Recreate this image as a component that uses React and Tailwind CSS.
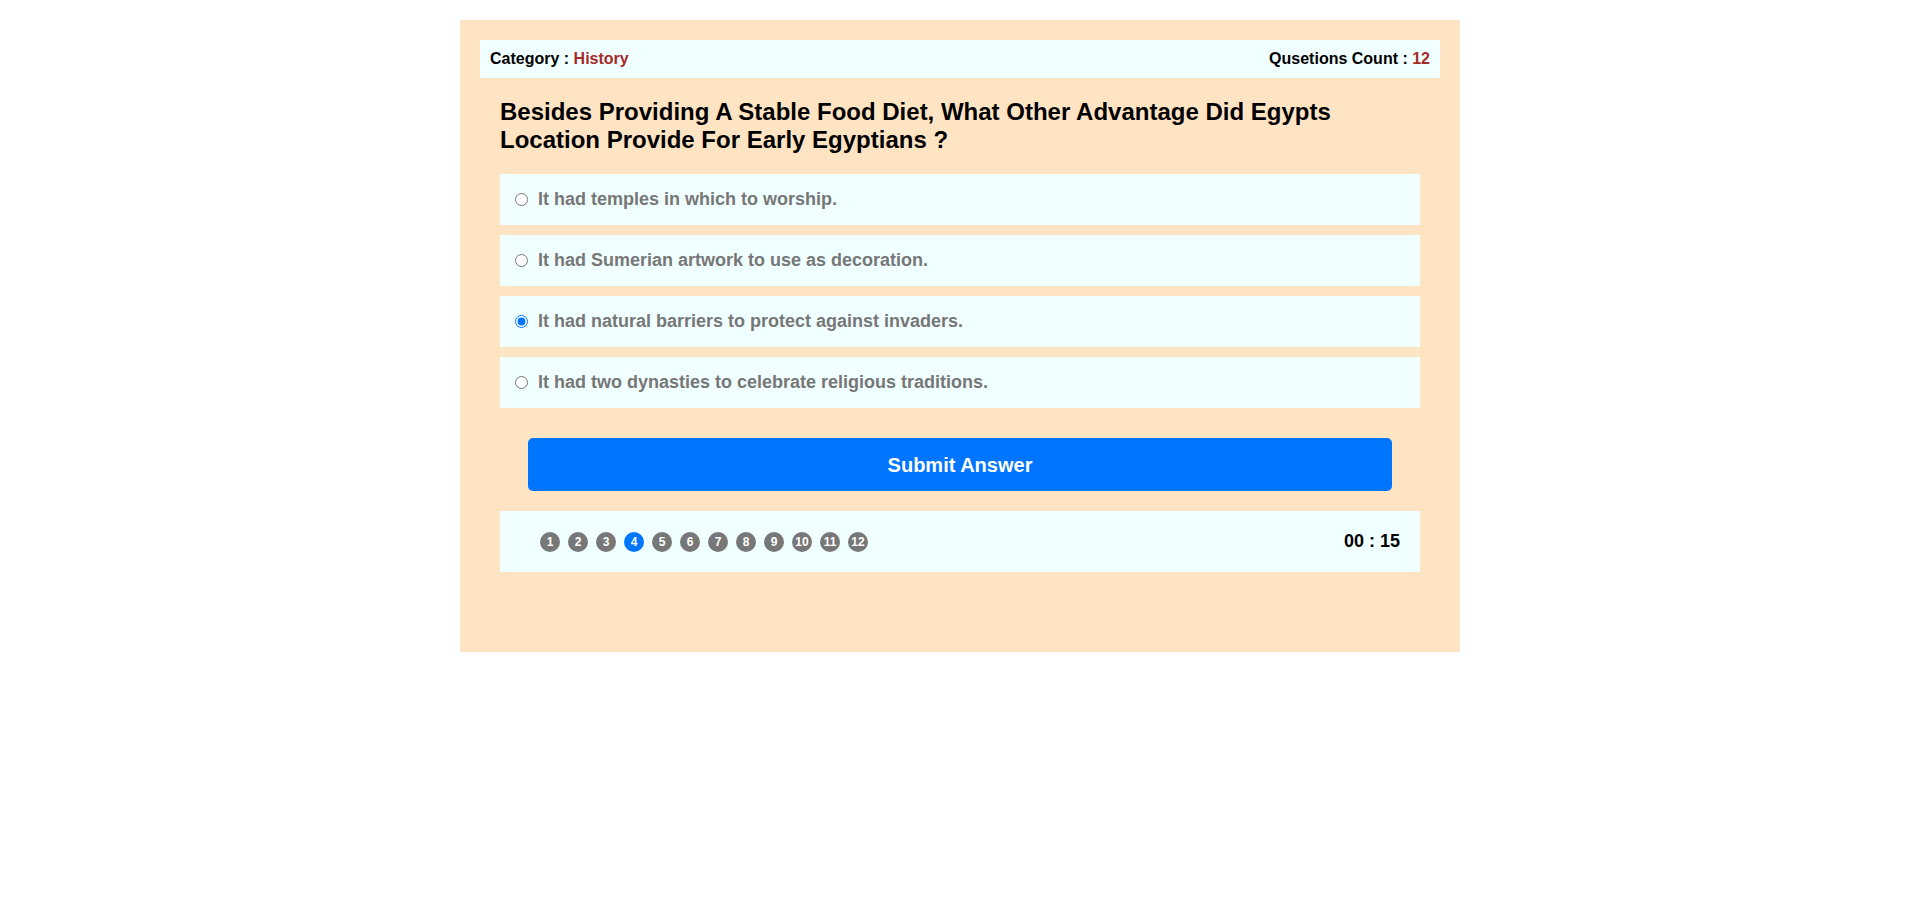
import { useState } from "react";

export default function App() {
  const [selected, setSelected] = useState(2);
  const [current] = useState(4);

  const answers = [
    "It had temples in which to worship.",
    "It had Sumerian artwork to use as decoration.",
    "It had natural barriers to protect against invaders.",
    "It had two dynasties to celebrate religious traditions.",
  ];

  const bullets = [1, 2, 3, 4, 5, 6, 7, 8, 9, 10, 11, 12];

  return (
    <div className="min-h-screen bg-white font-['Liberation_Sans',Arial,sans-serif] pt-5">
      <div className="mx-auto w-[1000px] h-[632px] bg-[#ffe4c4] p-5">
        {/* Info bar */}
        <div className="flex items-center justify-between h-[38px] px-[10px] bg-[#f0ffff] text-[16px] font-bold text-black">
          <div>
            Category : <span className="text-[#a52a2a]">History</span>
          </div>
          <div>
            Qusetions Count : <span className="text-[#a52a2a]">12</span>
          </div>
        </div>

        <div className="px-5">
          {/* Question */}
          <h2 className="mt-5 mb-5 text-[24px] leading-[28px] font-bold text-black">
            Besides Providing A Stable Food Diet, What Other Advantage Did Egypts
            Location Provide For Early Egyptians ?
          </h2>

          {/* Answers */}
          <div className="flex flex-col gap-[10px]">
            {answers.map((item, i) => (
              <label
                key={i}
                className="flex items-center h-[51px] pl-[15px] bg-[#f0ffff] cursor-pointer"
              >
                <input
                  type="radio"
                  name="answer"
                  checked={selected === i}
                  onChange={() => setSelected(i)}
                  className="w-[13px] h-[13px] m-0 accent-[#0075ff]"
                />
                <span className="ml-[10px] text-[18px] font-bold text-[#777777]">
                  {item}
                </span>
              </label>
            ))}
          </div>

          {/* Submit */}
          <div className="px-[28px] mt-[30px]">
            <button className="w-full h-[53px] rounded-[5px] bg-[#0075ff] text-white text-[20px] font-bold">
              Submit Answer
            </button>
          </div>

          {/* Bullets + timer */}
          <div className="mt-5 flex items-center justify-between h-[61px] pl-[40px] pr-5 bg-[#f0ffff]">
            <div className="flex gap-[8px]">
              {bullets.map((n) => (
                <span
                  key={n}
                  className={`w-5 h-5 rounded-full grid place-items-center text-[12px] font-bold text-white ${
                    n === current ? "bg-[#0075ff]" : "bg-[#777777]"
                  }`}
                >
                  {n}
                </span>
              ))}
            </div>
            <div className="text-[18px] font-bold text-black">00 : 15</div>
          </div>
        </div>
      </div>
    </div>
  );
}
